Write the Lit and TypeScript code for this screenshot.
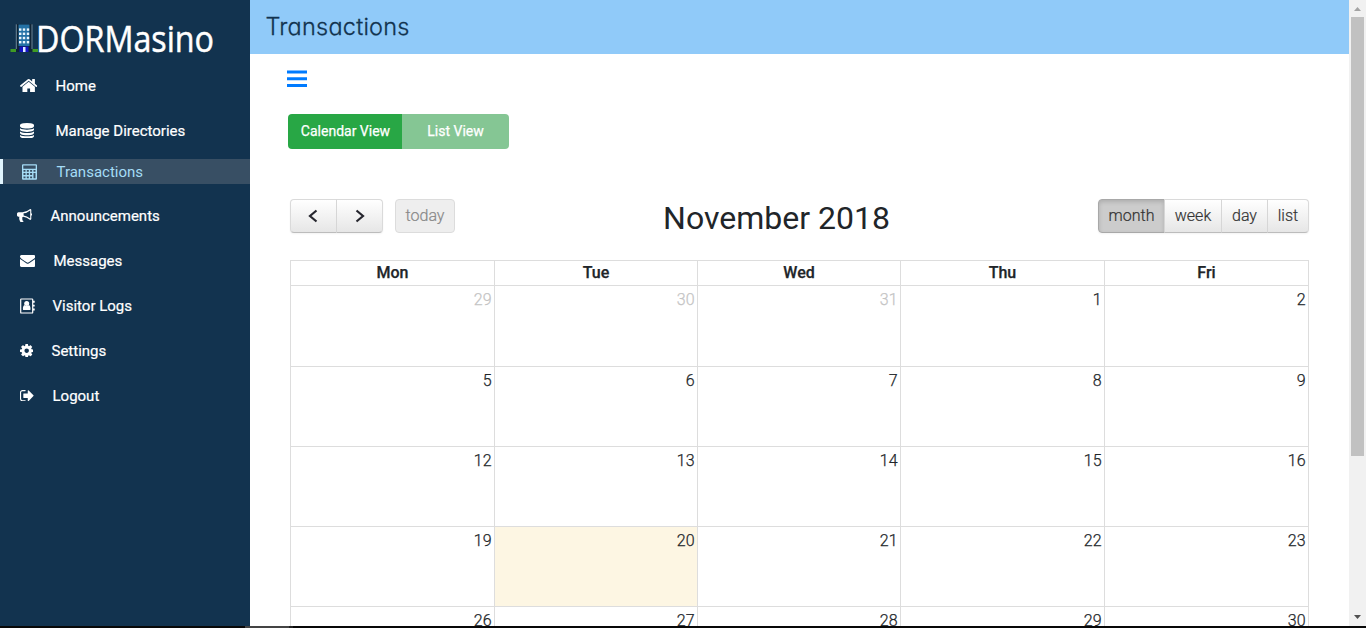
import { LitElement, html, css, svg } from "lit";
import { customElement } from "lit/decorators.js";
import { classMap } from "lit/directives/class-map.js";

const icons: Record<string, any> = {
  home: svg`<svg width="17.4" height="13.6" viewBox="89 253 1614 1283" preserveAspectRatio="none"><path d="M1472 992v480q0 26-19 45t-45 19h-384v-384h-256v384h-384q-26 0-45-19t-19-45v-480q0-1 .5-3t.5-3l575-474 575 474q1 2 1 6zm223-69l-62 74q-8 9-21 11h-3q-13 0-21-7l-692-577-692 577q-12 8-24 7-13-2-21-11l-62-74q-8-10-7-23.5t11-21.5l719-599q32-26 76-26t76 26l244 204v-195q0-14 9-23t23-9h192q14 0 23 9t9 23v408l219 182q10 8 11 21.5t-7 23.5z"/></svg>`,
  database: svg`<svg width="14" height="15.6" viewBox="128 0 1536 1792" preserveAspectRatio="none"><path d="M896 768q237 0 443-43t325-127v170q0 69-103 128t-280 93.5-385 34.5-385-34.5-280-93.5-103-128v-170q119 84 325 127t443 43zm0 768q237 0 443-43t325-127v170q0 69-103 128t-280 93.5-385 34.5-385-34.5-280-93.5-103-128v-170q119 84 325 127t443 43zm0-384q237 0 443-43t325-127v170q0 69-103 128t-280 93.5-385 34.5-385-34.5-280-93.5-103-128v-170q119 84 325 127t443 43zm0-1152q208 0 385 34.5t280 93.5 103 128v128q0 69-103 128t-280 93.5-385 34.5-385-34.5-280-93.5-103-128v-128q0-69 103-128t280-93.5 385-34.5z"/></svg>`,
  calculator: svg`<svg width="15" height="16" viewBox="0 0 15 16"><path fill-rule="evenodd" d="M1 .3h13a1 1 0 0 1 1 1v13.400a1 1 0 0 1-1 1H1a1 1 0 0 1-1-1V1.300a1 1 0 0 1 1-1zM1.300 1.600v3.100h12.400V1.600zM1.500 6v1.700h2V6zm3.300 0v1.700h2V6zm3.300 0v1.700h2V6zm3.400 0v1.700h2V6zM1.500 9.100v1.800h2V9.100zm3.300 0v1.800h2V9.100zm3.300 0v1.800h2V9.100zm3.400 0v5.200h2V9.100zM1.500 12.500v1.800h2v-1.800zm3.300 0v1.800h2v-1.800zm3.300 0v1.800h2v-1.800z"/></svg>`,
  bullhorn: svg`<svg width="15.400" height="13.200" viewBox="0 128 1792 1544" preserveAspectRatio="none"><path d="M1664 640q53 0 90.500 37.500t37.500 90.500-37.500 90.500-90.500 37.500v384q0 52-38 90t-90 38q-417-347-812-380-58 19-91 66t-31 100.500 40 92.500q-20 33-23 65.500t6 58 33.500 55 48 50 61.500 50.500q-29 58-111.500 83t-168.500 11.500-132-55.500q-7-23-29.500-87.500t-32-94.500-23-89-15-101 3.500-98.500 22-110.500h-122q-66 0-113-47t-47-113v-192q0-66 47-113t113-47h480q435 0 896-384 52 0 90 38t38 90v384zm-128 604v-954q-394 302-768 343v270q377 42 768 341z"/></svg>`,
  envelope: svg`<svg width="15.400" height="12" viewBox="0 256 1792 1408" preserveAspectRatio="none"><path d="M1792 710v794q0 66-47 113t-113 47h-1472q-66 0-113-47t-47-113v-794q44 49 101 87 362 246 497 345 57 42 92.500 65.500t94.500 48 110 24.500h2q51 0 110-24.500t94.500-48 92.500-65.500q170-123 498-345 57-39 100-87zm0-294q0 79-49 151t-122 123q-376 261-468 325-10 7-42.500 31t-54 38.500-52 32.500-57.500 27-50 9h-2q-23 0-50-9t-57.500-27-52-32.500-54-38.500-42.500-31q-91-64-262-182.500t-205-142.500q-62-42-117-115.500t-55-136.500q0-78 41.500-130t118.500-52h1472q65 0 112.500 47t47.500 113z"/></svg>`,
  book: svg`<svg width="15" height="16" viewBox="0 0 15 16"><path fill-rule="evenodd" d="M1.300 .4h10.800a1.200 1.200 0 0 1 1.200 1.200v12.800a1.200 1.200 0 0 1-1.200 1.200H1.300A1.200 1.200 0 0 1 .1 14.400V1.600A1.200 1.200 0 0 1 1.300.4zM1.300 1.600v12.800h10.800V1.600z"/><circle cx="6.700" cy="5.600" r="2.500"/><path d="M4.400 7.100c-1.200.7-1.500 2.400-1.500 3.800 0 .8.500 1.200 1.200 1.200h5.200c.7 0 1.200-.4 1.200-1.200 0-1.400-.3-3.100-1.500-3.800-1.200 1.300-3.400 1.300-4.600 0zM13 2.800h1.700v1.900H13zM13 6.700h1.700v1.900H13zM13 10.600h1.700v1.900H13z"/></svg>`,
  cog: svg`<svg width="13.400" height="13.400" viewBox="128 128 1536 1536"><path d="M1152 896q0-106-75-181t-181-75-181 75-75 181 75 181 181 75 181-75 75-181zm512-109v222q0 12-8 23t-20 13l-185 28q-19 54-39 91 35 50 107 138 10 12 10 25t-9 23q-27 37-99 108t-94 71q-12 0-26-9l-138-108q-44 23-91 38-16 136-29 186-7 28-36 28h-222q-14 0-24.500-8.500t-11.500-21.500l-28-184q-49-16-90-37l-141 107q-10 9-25 9-14 0-25-11-126-114-165-168-7-10-7-23 0-12 8-23 15-21 51-66.500t54-70.500q-27-50-41-99l-183-27q-13-2-21-12.500t-8-23.500v-222q0-12 8-23t19-13l186-28q14-46 39-92-40-57-107-138-10-12-10-24 0-10 9-23 26-36 98.500-107.500t94.500-71.500q13 0 26 10l138 107q44-23 91-38 16-136 29-186 7-28 36-28h222q14 0 24.500 8.500t11.500 21.500l28 184q49 16 90 37l142-107q9-9 24-9 13 0 25 10 129 119 165 170 7 8 7 22 0 12-8 23-15 21-51 66.500t-54 70.500q26 50 41 98l183 28q13 2 21 12.500t8 23.500z"/></svg>`,
  signout: svg`<svg width="13.600" height="11.400" viewBox="64 256 1568 1280" preserveAspectRatio="none"><path d="M704 1440q0 4 1 20t.5 26.500-3 23.500-10 19.500-20.500 6.500h-320q-119 0-203.500-84.500t-84.500-203.500v-704q0-119 84.500-203.500t203.500-84.500h320q13 0 22.500 9.500t9.500 22.500q0 4 1 20t.5 26.500-3 23.500-10 19.500-20.500 6.500h-320q-66 0-113 47t-47 113v704q0 66 47 113t113 47h312l11.500 1 11.500 3 8 5.500 7 9 2 13.500zm928-544q0 26-19 45l-544 544q-19 19-45 19t-45-19-19-45v-288h-448q-26 0-45-19t-19-45v-384q0-26 19-45t45-19h448v-288q0-26 19-45t45-19 45 19l544 544q19 19 19 45z"/></svg>`,
};

const nav = [
  { id: "home", icon: "home", label: "Home" },
  { id: "directories", icon: "database", label: "Manage Directories" },
  { id: "transactions", icon: "calculator", label: "Transactions" },
  { id: "announcements", icon: "bullhorn", label: "Announcements" },
  { id: "messages", icon: "envelope", label: "Messages" },
  { id: "visitors", icon: "book", label: "Visitor Logs" },
  { id: "settings", icon: "cog", label: "Settings" },
  { id: "logout", icon: "signout", label: "Logout" },
];

@customElement("dorm-sidebar")
class DormSidebar extends LitElement {
  static styles = css`
    :host { display: block; width: 250px; flex: none; background: #12334f; color: #fff; }
    .logo { display: block; width: 250px; height: 63px; }
    .item { display: flex; align-items: center; height: 45px; box-sizing: border-box; font-size: 15px; font-weight: 400; white-space: nowrap; -webkit-text-stroke: .2px currentColor; }
    .icon { display: flex; flex: none; box-sizing: border-box; width: 55.500px; padding-left: 20px; }
    svg { fill: currentColor; display: block; }
    .transactions { height: 25px; margin: 6px 0 9px; border-left: 3px solid #e1f5fe; background: #384f64; color: #a5dcf6; -webkit-text-stroke: 0; }
    .transactions .icon { width: 53.500px; padding-left: 19px; }
    .announcements .icon { width: 50.500px; padding-left: 17px; }
    .messages .icon { width: 53.500px; }
    .visitors .icon { width: 52.500px; }
    .settings .icon { width: 51.500px; }
    .logout .icon { width: 52.500px; }
  `;
  render() {
    return html`
      <svg class="logo" viewBox="0 0 250 63">
        <path d="M10.500 49h27.500v3H10.500z" fill="#3f9b24" />
        <path d="M16 24h16.500v28H16z" fill="#0f2436" />
        <path d="M16.300 24.300V49M32 24.300V49" stroke="#87a2b5" stroke-width=".8" />
        <path d="M18.500 24.500h11V46h-11z" fill="#2371a5" />
        <path d="M19.500 46.500h9V52h-9z" fill="#1414c4" />
        <path d="M23 47h2.500v5H23z" fill="#dce9ff" />
        ${[28.400, 32.600, 36.800, 41].map((y) => [19, 22.800, 26.800].map((x) => svg`<rect x=${x} y=${y} width="2.400" height="2.400" fill="#e9f5fc" />`))}
        <text x="36" y="52" font-family="Open Sans, sans-serif" font-size="36.500" textLength="178" lengthAdjust="spacingAndGlyphs" fill="#fff" stroke="#fff" stroke-width=".5">DORMasino</text>
      </svg>
      ${nav.map((n) => html`<div class="item ${n.id}"><span class="icon">${icons[n.icon]}</span><span>${n.label}</span></div>`)}
    `;
  }
}

const weeks = [
  [29, 30, 31, 1, 2],
  [5, 6, 7, 8, 9],
  [12, 13, 14, 15, 16],
  [19, 20, 21, 22, 23],
  [26, 27, 28, 29, 30],
];

@customElement("dorm-calendar")
class DormCalendar extends LitElement {
  static styles = css`
    :host { display: block; width: 1019px; color: #212529; }
    .bar { display: flex; align-items: center; height: 34px; }
    .side { flex: none; display: flex; }
    .right { justify-content: flex-end; }
    .title { flex: 1; text-align: center; font-size: 32px; line-height: 38px; white-space: nowrap; padding-top: 4px; }
    .group { display: flex; border-radius: 4px; box-shadow: 0 1px 2px rgba(0,0,0,.05); }
    .btn { box-sizing: border-box; display: flex; align-items: center; justify-content: center; height: 34px; border: 1px solid; border-color: #dadada #dadada #bcbcbc; background: linear-gradient(#fff, #e6e6e6); color: #333; font-size: 16px; font-weight: 300; line-height: 32px; -webkit-text-stroke: .2px currentColor; }
    .btn + .btn { border-left: 1px solid #d6d6d6; margin-left: -1px; }
    .btn:first-child { border-radius: 4px 0 0 4px; }
    .btn:last-child { border-radius: 0 4px 4px 0; }
    .arrow { width: 47px; padding: 0 1px 0 0; }
    .arrow + .arrow { padding: 0; }
    .arrow svg { fill: none; stroke: #26262e; stroke-width: 2.200; }
    .today { width: 60px; margin-left: 12px; border: 1px solid #dcdcdc; border-radius: 4px !important; background: #eeeeee; color: #888; }
    .btn.month { width: 67px; background: #ccc; border-color: #a8a8a8; box-shadow: inset 0 2px 4px rgba(0,0,0,.15); }
    .week { width: 58px; }
    .day { width: 47px; }
    .list { width: 42px; }
    .grid { display: grid; grid-template-columns: 204px 203px 203px 204px 204px; grid-template-rows: 25px 81px repeat(4, 80px); margin-top: 27px; border-left: 1px solid #ddd; border-top: 1px solid #ddd; }
    .cell { box-sizing: border-box; border-right: 1px solid #ddd; border-bottom: 1px solid #ddd; font-size: 16px; line-height: 24px; text-align: right; padding: 2px 2.500px 0 0; font-weight: 300; -webkit-text-stroke: .25px currentColor; }
    .head { text-align: center; font-weight: 500; padding: 0; line-height: 23px; }
    .muted { color: #c4c4c4; }
    .now { background: #fdf6e3; }
  `;
  render() {
    return html`
      <div class="bar">
        <div class="side">
          <div class="group">
            <div class="btn arrow"><svg width="12" height="14" viewBox="0 0 12 14"><path d="M9.500 1.500L3 7l6.500 5.500" /></svg></div>
            <div class="btn arrow"><svg width="12" height="14" viewBox="0 0 12 14"><path d="M2.500 1.500L9 7l-6.500 5.500" /></svg></div>
          </div>
          <div class="btn today">today</div>
        </div>
        <div class="title">November 2018</div>
        <div class="side right">
          <div class="group">
            ${["month", "week", "day", "list"].map((v) => html`<div class="btn ${v}">${v}</div>`)}
          </div>
        </div>
      </div>
      <div class="grid">
        ${["Mon", "Tue", "Wed", "Thu", "Fri"].map((d) => html`<div class="cell head">${d}</div>`)}
        ${weeks.map((w, i) => w.map((d) => html`<div class=${classMap({ cell: true, muted: i === 0 && d > 20, now: d === 20 })}>${d}</div>`))}
      </div>
    `;
  }
}

@customElement("app-root")
class AppRoot extends LitElement {
  static styles = css`
    :host { display: flex; flex-direction: column; width: 1366px; height: 628px; overflow: hidden; background: #fff; font-family: Roboto, sans-serif; }
    .page { display: flex; height: 626px; flex: none; overflow: hidden; }
    .main { width: 1099px; flex: none; overflow: hidden; }
    .header { height: 54px; box-sizing: border-box; padding-left: 15.500px; background: #90caf9; color: #12334f; font: 300 23.500px/54px Inter, sans-serif; font-feature-settings: "cv11"; letter-spacing: .23px; -webkit-text-stroke: .3px currentColor; }
    .burger { display: block; margin: 16px 0 0 37px; }
    .toggle { display: flex; width: 221px; height: 35px; margin: 26px 0 0 38px; border-radius: 4px; overflow: hidden; color: #fff; font-size: 14px; font-weight: 400; -webkit-text-stroke: .25px currentColor; line-height: 35px; text-align: center; }
    .on { width: 114px; box-sizing: border-box; padding-left: 1px; background: #28a745; }
    .off { flex: 1; background: #85c694; }
    .cal { margin: 50px 0 0 40px; }
    .scroll { display: flex; flex-direction: column; align-items: center; width: 17px; flex: none; background: #f1f1f1; }
    .arrow { display: block; width: 17px; height: 17px; flex: none; }
    .thumb { width: 13px; height: 439px; background: #c1c1c1; margin-bottom: auto; }
    .strip { display: flex; height: 2px; background: #080808; }
    .mark { width: 48px; margin-left: 245px; background: linear-gradient(90deg, #444 44px, #222 44px); }
  `;
  render() {
    return html`
      <div class="page">
        <dorm-sidebar></dorm-sidebar>
        <div class="main">
          <div class="header">Transactions</div>
          <svg class="burger" width="20" height="18" viewBox="0 0 20 18"><path d="M0 .5h20v3H0zM0 7.300h20v3H0zM0 14h20v3H0z" fill="#007bff" /></svg>
          <div class="toggle"><div class="on">Calendar View</div><div class="off">List View</div></div>
          <dorm-calendar class="cal"></dorm-calendar>
        </div>
        <div class="scroll">
          <svg class="arrow" viewBox="0 0 17 17"><path d="M5 11h7L8.500 7z" fill="#a3a3a3" /></svg>
          <div class="thumb"></div>
          <svg class="arrow" viewBox="0 0 17 17"><path d="M5 6h7L8.500 10z" fill="#505050" /></svg>
        </div>
      </div>
      <div class="strip"><div class="mark"></div></div>
    `;
  }
}
